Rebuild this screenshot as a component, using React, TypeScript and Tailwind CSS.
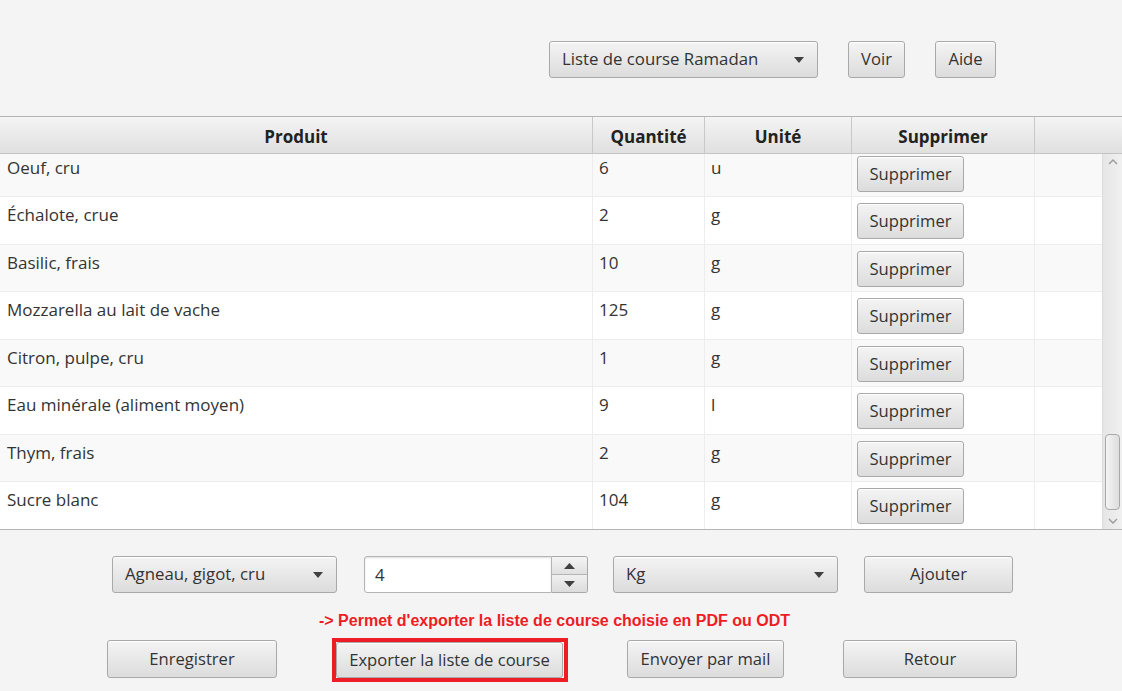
import React from "react";

const font = { fontFamily: '"Open Sans", "Noto Sans", sans-serif' };

const btn =
  "flex items-center justify-center rounded-[3px] border border-[#a9a9a9] bg-gradient-to-b from-[#f4f4f4] to-[#dcdcdc] text-[#333] shadow-[inset_0_1px_0_#ffffff] text-[16.6px] leading-none";

function Arrow() {
  return (
    <svg width="10" height="6" viewBox="0 0 10 6" className="shrink-0">
      <path d="M0 0 L10 0 L5 6 Z" fill="#404040" />
    </svg>
  );
}

function Combo({ label, w, ml }: { label: string; w: string; ml: string }) {
  return (
    <div className={`${btn} ${w} ${ml} h-[37px] !justify-between pl-[12px] pr-[13px] !text-[16.8px]`}>
      <span>{label}</span>
      <Arrow />
    </div>
  );
}

const rows: [string, string, string][] = [
  ["Oeuf, cru", "6", "u"],
  ["Échalote, crue", "2", "g"],
  ["Basilic, frais", "10", "g"],
  ["Mozzarella au lait de vache", "125", "g"],
  ["Citron, pulpe, cru", "1", "g"],
  ["Eau minérale (aliment moyen)", "9", "l"],
  ["Thym, frais", "2", "g"],
  ["Sucre blanc", "104", "g"],
];

export default function App() {
  return (
    <div className="w-[1122px] h-[691px] bg-[#f4f4f4] overflow-hidden text-[#333]" style={font}>
      {/* top bar */}
      <div className="h-[116px] pt-[41px] flex items-start">
        <Combo label="Liste de course Ramadan" w="w-[269px]" ml="ml-[549px]" />
        <div className={`${btn} w-[57px] h-[37px] ml-[30px]`}>Voir</div>
        <div className={`${btn} w-[61px] h-[37px] ml-[30px]`}>Aide</div>
      </div>

      {/* table */}
      <div className="border-t border-b border-[#b5b5b5] bg-white">
        <div className="flex h-[37px] pt-[4px] border-b border-[#c4c4c4] bg-gradient-to-b from-[#f4f4f4] to-[#e0e0e0] font-bold text-[17px] text-[#222]">
          <div className="w-[593px] -mt-[4px] border-r border-[#c8c8c8] flex items-center justify-center pt-[4px]">Produit</div>
          <div className="w-[112px] -mt-[4px] border-r border-[#c8c8c8] flex items-center justify-center pt-[4px]">Quantité</div>
          <div className="w-[147px] -mt-[4px] border-r border-[#c8c8c8] flex items-center justify-center pt-[4px]">Unité</div>
          <div className="w-[183px] -mt-[4px] border-r border-[#c8c8c8] flex items-center justify-center pt-[4px]">Supprimer</div>
          <div className="flex-1" />
        </div>
        <div className="flex h-[375px]">
          <div className="w-[1102px] h-[375px] overflow-hidden">
            <div className="-mt-[4px]">
              {rows.map((r, i) => (
                <div
                  key={i}
                  className={`flex ${i % 2 === 0 ? "h-[47px] bg-[#f9f9f9]" : "h-[48px] bg-white"} border-b border-[#ededed] text-[17px]`}
                >
                  <div className="w-[593px] border-r border-[#ededed] pl-[7px] pt-[6px] leading-[24px]">{r[0]}</div>
                  <div className="w-[112px] border-r border-[#ededed] pl-[6px] pt-[6px] leading-[24px]">{r[1]}</div>
                  <div className="w-[147px] border-r border-[#ededed] pl-[6px] pt-[6px] leading-[24px]">{r[2]}</div>
                  <div className="w-[183px] border-r border-[#ededed] pl-[5px] pt-[6px]">
                    <div className={`${btn} w-[107px] h-[36px]`}>Supprimer</div>
                  </div>
                  <div className="flex-1" />
                </div>
              ))}
            </div>
          </div>
          {/* scrollbar */}
          <div className="w-[20px] h-[375px] bg-gradient-to-r from-[#e6e6e6] to-[#f0f0f0] border-l border-[#dcdcdc] flex flex-col items-center">
            <svg width="10" height="6" viewBox="0 0 10 6" className="mt-[5px]">
              <path d="M1 5 L5 1 L9 5" stroke="#9a9a9a" strokeWidth="1.4" fill="none" />
            </svg>
            <div className="flex-1" />
            <div className="w-[15px] h-[76px] rounded-[4px] border border-[#a9a9a9] bg-gradient-to-r from-[#f4f4f4] to-[#dddddd]" />
            <svg width="10" height="6" viewBox="0 0 10 6" className="mt-[8px] mb-[5px]">
              <path d="M1 1 L5 5 L9 1" stroke="#9a9a9a" strokeWidth="1.4" fill="none" />
            </svg>
          </div>
        </div>
      </div>

      {/* add row */}
      <div className="flex items-start mt-[26px] h-[37px]">
        <Combo label="Agneau, gigot, cru" w="w-[225px]" ml="ml-[112px]" />
        <div className="ml-[27px] flex h-[37px]">
          <div className="w-[188px] h-[37px] bg-white border border-[#b5b5b5] rounded-l-[3px] shadow-[inset_0_1px_2px_#dcdcdc] flex items-center pl-[10px] text-[16.8px]">
            4
          </div>
          <div className="w-[36px] h-[37px] flex flex-col border border-l-0 border-[#a9a9a9] rounded-r-[3px] overflow-hidden">
            <div className="flex-1 flex items-center justify-center bg-gradient-to-b from-[#f4f4f4] to-[#e0e0e0] border-b border-[#b5b5b5]">
              <svg width="11" height="6" viewBox="0 0 11 6"><path d="M0 6 L5.5 0 L11 6 Z" fill="#404040" /></svg>
            </div>
            <div className="flex-1 flex items-center justify-center bg-gradient-to-b from-[#f0f0f0] to-[#dcdcdc]">
              <svg width="11" height="6" viewBox="0 0 11 6"><path d="M0 0 L11 0 L5.5 6 Z" fill="#404040" /></svg>
            </div>
          </div>
        </div>
        <Combo label="Kg" w="w-[225px]" ml="ml-[25px]" />
        <div className={`${btn} w-[149px] h-[37px] ml-[26px]`}>Ajouter</div>
      </div>

      {/* red note */}
      <div
        className="mt-[18px] ml-[319px] text-[16px] leading-[20px] font-bold text-[#ee1c25]"
        style={{ fontFamily: '"Liberation Sans", Arial, sans-serif' }}
      >
        -&gt; Permet d'exporter la liste de course choisie en PDF ou ODT
      </div>

      {/* bottom buttons */}
      <div className="flex items-start mt-[7px]">
        <div className={`${btn} w-[170px] h-[38px] ml-[107px] mt-[2px]`}>Enregistrer</div>
        <div className="ml-[55px] w-[236px] h-[44px] border-[4px] border-[#ee1c25] flex items-center">
          <div className={`${btn} w-[227px] h-[36px]`}>Exporter la liste de course</div>
        </div>
        <div className={`${btn} w-[157px] h-[38px] ml-[59px] mt-[2px]`}>Envoyer par mail</div>
        <div className={`${btn} w-[174px] h-[38px] ml-[59px] mt-[2px]`}>Retour</div>
      </div>
    </div>
  );
}
